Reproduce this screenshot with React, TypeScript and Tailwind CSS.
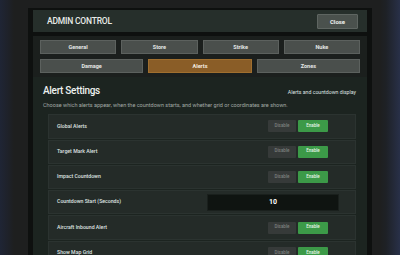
const tabsTop = ["General", "Store", "Strike", "Nuke"]
const tabsBottom = ["Damage", "Alerts", "Zones"]

type Row = { label: string; kind: "toggle" | "number"; value?: string }

const rows: Row[] = [
  { label: "Global Alerts", kind: "toggle" },
  { label: "Target Mark Alert", kind: "toggle" },
  { label: "Impact Countdown", kind: "toggle" },
  { label: "Countdown Start (Seconds)", kind: "number", value: "10" },
  { label: "Aircraft Inbound Alert", kind: "toggle" },
  { label: "Show Map Grid", kind: "toggle" },
]

function Toggle() {
  return (
    <div className="mr-[27px] flex items-center gap-[2px]">
      <button className="flex h-[12px] w-[28px] items-center justify-center rounded-[1px] bg-[#363a39] text-[4.5px] font-medium text-[#7c807e]">
        Disable
      </button>
      <button className="flex h-[12px] w-[30px] items-center justify-center rounded-[1px] bg-[#3c9a48] text-[4.5px] font-medium text-[#e3f5e4]">
        Enable
      </button>
    </div>
  )
}

export default function App() {
  return (
    <div className="h-[255px] w-[400px] overflow-hidden bg-[linear-gradient(90deg,#1f2535_0px,#1e2128_9px,#1e1f1f_14px,#1e1f1f_380px,#1e2126_386px,#283048_400px)] font-['Roboto',sans-serif] text-white">
      <div className="ml-[28px] mt-[8px] flex h-[260px] w-[344px] flex-col bg-[#0e100f] px-[5px] pt-[2px]">
        {/* header */}
        <div className="flex h-[22px] shrink-0 items-center justify-between bg-[#262f2b] pl-[14px] pr-[9px]">
          <span className="text-[8.5px] font-medium tracking-[-0.2px] text-[#e8ebe9]">ADMIN CONTROL</span>
          <button className="flex h-[15px] w-[41px] items-center justify-center rounded-[1px] border border-[#5e6561] bg-[#4a514d] text-[6px] font-bold text-[#eef0ee]">
            Close
          </button>
        </div>

        {/* tabs */}
        <div className="mt-[4px] flex shrink-0 flex-col gap-[5px] bg-[#1b1f1d] px-[7px] py-[4px]">
          <div className="grid grid-cols-4 gap-[5px]">
            {tabsTop.map((t) => (
              <button
                key={t}
                className="flex h-[14px] items-center justify-center border border-[#5c615e] bg-[#4a4f4c] text-[5.5px] font-bold text-[#e4e6e5]"
              >
                {t}
              </button>
            ))}
          </div>
          <div className="grid grid-cols-3 gap-[5px]">
            {tabsBottom.map((t) => (
              <button
                key={t}
                className={
                  t === "Alerts"
                    ? "flex h-[14px] items-center justify-center border border-[#a06f2f] bg-[#8a5d27] text-[5.5px] font-bold text-[#f4ece0]"
                    : "flex h-[14px] items-center justify-center border border-[#5c615e] bg-[#4a4f4c] text-[5.5px] font-bold text-[#e4e6e5]"
                }
              >
                {t}
              </button>
            ))}
          </div>
        </div>

        {/* content */}
        <div className="flex flex-1 flex-col bg-[#1c2420] px-[10px] pt-[6px]">
          <div className="flex items-end justify-between">
            <span className="text-[10px] font-medium tracking-[-0.3px] text-[#eef1ef]">Alert Settings</span>
            <span className="mb-[1px] mr-[1px] text-[5.2px] text-[#dfe3e1]">Alerts and countdown display</span>
          </div>
          <p className="mt-[3px] text-[5.5px] text-[#a3aaa6]">
            Choose which alerts appear, when the countdown starts, and whether grid or coordinates are shown.
          </p>
          <div className="ml-[5px] mr-[1px] mt-[5px] flex flex-col gap-[1px]">
            {rows.map((r) => (
              <div
                key={r.label}
                className="flex h-[24.3px] items-center justify-between border border-[#2b3330] bg-[#242b28] pl-[8px]"
              >
                <span className="text-[5.2px] font-medium text-[#dfe3e1]">{r.label}</span>
                {r.kind === "toggle" ? (
                  <Toggle />
                ) : (
                  <div className="mr-[16px] flex h-[17px] w-[132px] items-center justify-center border border-[#1a201d] bg-[#0f1411] text-[7px] font-bold text-white">
                    {r.value}
                  </div>
                )}
              </div>
            ))}
          </div>
        </div>
      </div>
    </div>
  )
}
